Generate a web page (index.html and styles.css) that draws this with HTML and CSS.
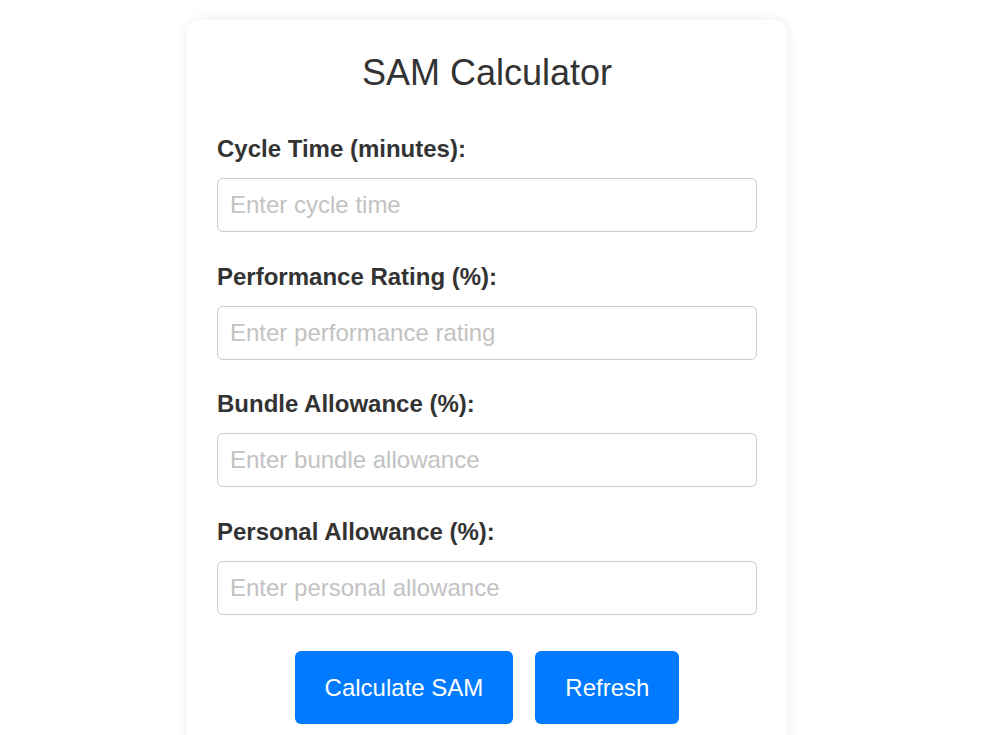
FILE: index.html
```html
<!DOCTYPE html>
<html lang="en">
<head>
    <meta charset="UTF-8">
    <meta name="viewport" content="width=device-width, initial-scale=1.0">
    <title>SAM Calculator</title>
    <link rel="stylesheet" href="styles.css">
</head>
<body>
    <div class="container">
        <h1>SAM Calculator</h1>

        <form id="samForm">
            <div class="form-group">
                <label for="cycleTime">Cycle Time (minutes):</label>
                <input type="number" id="cycleTime" placeholder="Enter cycle time">
            </div>

            <div class="form-group">
                <label for="performance">Performance Rating (%):</label>
                <input type="number" id="performance" placeholder="Enter performance rating">
            </div>

            <div class="form-group">
                <label for="bundle">Bundle Allowance (%):</label>
                <input type="number" id="bundle" placeholder="Enter bundle allowance">
            </div>

            <div class="form-group">
                <label for="personal">Personal Allowance (%):</label>
                <input type="number" id="personal" placeholder="Enter personal allowance">
            </div>

            <div class="buttons">
                <button type="button" id="calcBtn">Calculate SAM</button>
                <button type="reset" id="refreshBtn">Refresh</button>
            </div>
        </form>
    </div>
</body>
</html>
```

FILE: styles.css
```css
body {
    font-family: "Liberation Sans", Arial, sans-serif;
    margin: 0;
    padding: 0 20px 0 0;
    background: #fff;
}

.container {
    width: 600px;
    box-sizing: border-box;
    margin: 20px auto;
    padding: 30px;
    background: white;
    border-radius: 12px;
    box-shadow: 0 0 12px rgba(0, 0, 0, 0.08);
}

h1 {
    text-align: center;
    font-size: 36px;
    font-weight: normal;
    line-height: 42px;
    color: #333;
    margin: 2px 0 41px;
}

.form-group {
    margin-bottom: 30.5px;
}

label {
    display: block;
    font-size: 24px;
    line-height: 28px;
    font-weight: bold;
    color: #333;
    margin-bottom: 15px;
}

input {
    display: block;
    width: 100%;
    height: 54px;
    box-sizing: border-box;
    padding: 0 12px;
    border: 1px solid #ccc;
    border-radius: 6px;
    font-family: inherit;
    font-size: 24px;
    color: #333;
}

input::placeholder {
    color: #c2c2c2;
}

.buttons {
    display: flex;
    justify-content: center;
    gap: 22px;
    margin-top: 36.5px;
}

button {
    background: #007bff;
    color: white;
    border: none;
    padding: 22.5px 30px;
    border-radius: 6px;
    font-family: inherit;
    font-size: 24px;
    line-height: 27.6px;
    cursor: pointer;
}

button:hover {
    background: #0069d9;
}
```
